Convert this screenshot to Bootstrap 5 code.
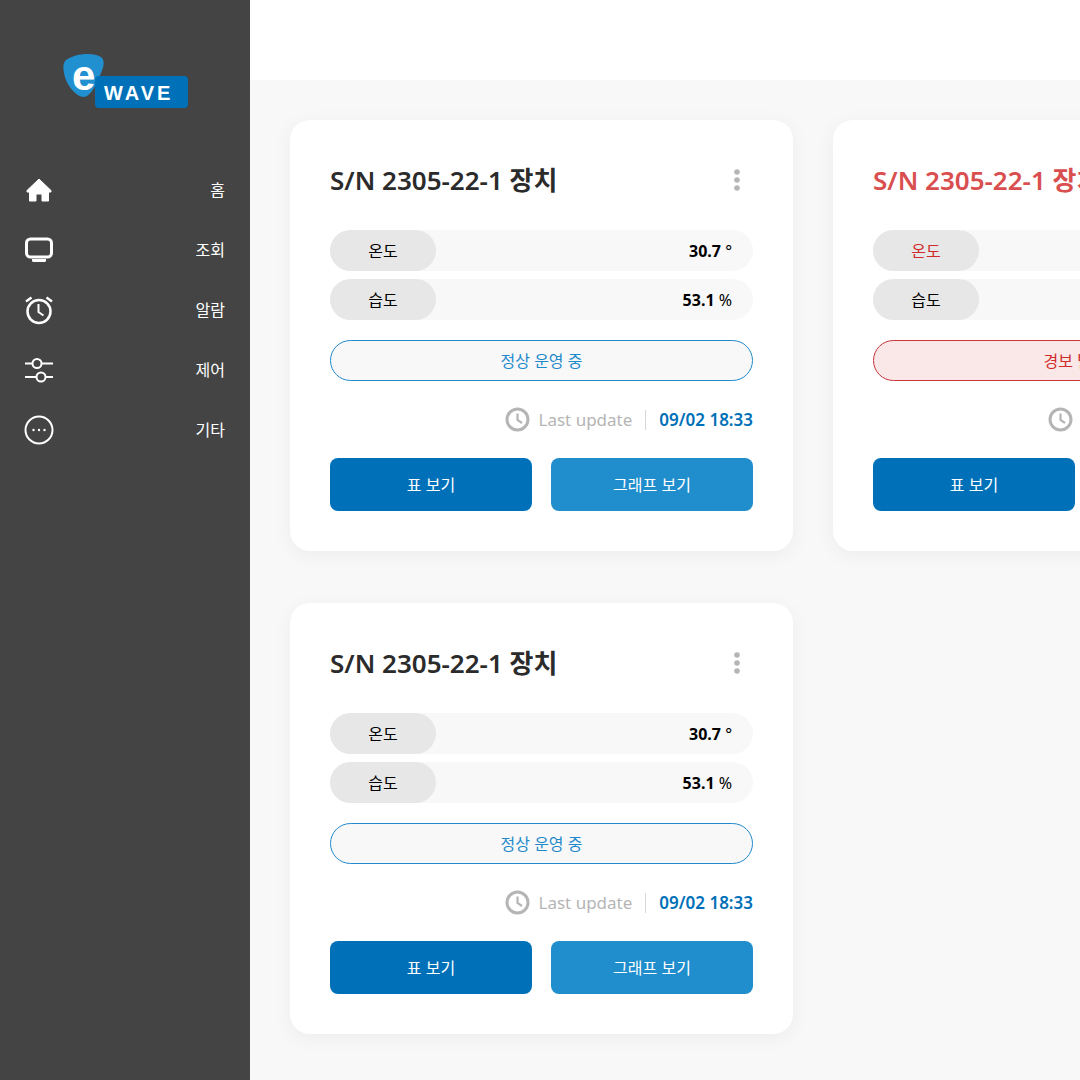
<!DOCTYPE html>
<html lang="ko">
  <head>
    <meta charset="UTF-8" />
    <meta name="viewport" content="width=device-width, initial-scale=1" />
    <title>eWAVE - 장치 목록</title>
    <link href="https://cdn.jsdelivr.net/npm/bootstrap@5.3.0/dist/css/bootstrap.min.css" rel="stylesheet" />
    <style>
      html, body { height: 1080px; overflow: hidden; }
      body {
        background: #f8f8f8;
        font-family: "Noto Sans", "Noto Sans CJK KR", sans-serif;
        color: #000;
      }
      .side-bar { width: 250px; flex: 0 0 250px; height: 1080px; background: #444; }
      .side-logo { height: 160px; padding: 53px 0 0 63px; }
      .side-item { height: 60px; padding: 0 25px 0 24px; color: #fff; font-size: 16px; }
      .side-icon { width: 30px; height: 30px; display: block; }
      .top-strip { height: 80px; background: #fff; }
      .device-grid {
        display: grid;
        grid-template-columns: 503px 503px;
        column-gap: 40px;
        row-gap: 52px;
        padding: 40px;
      }
      .device-card {
        height: 431px;
        padding: 40px;
        background: #fff;
        border-radius: 20px;
        box-shadow: 0 4px 20px rgba(0, 0, 0, 0.05);
      }
      .device-head { height: 40px; margin-bottom: 30px; }
      .device-title { font-size: 26px; font-weight: 600; line-height: 40px; color: #2b2b2b; margin: 0; white-space: nowrap; }
      .is-alarm .device-title { color: #d94f4f; }
      .more-dots { width: 6px; height: 22px; margin-right: 13px; }
      .metric-row { height: 41px; margin-bottom: 8px; background: #f8f8f8; border-radius: 21px; font-size: 16px; padding-right: 21px; }
      .metric-name { width: 106px; height: 41px; background: #e7e7e7; border-radius: 21px; }
      .metric-alert { color: #d02b2b; }
      .metric-val { font-weight: 700; }
      .metric-unit { font-weight: 400; }
      .status-pill { height: 41px; margin-top: 20px; border: 1px solid #1f8acb; border-radius: 21px; background: #f8f8f8; color: #1f8acb; font-size: 16px; }
      .is-alarm .status-pill { border-color: #c8353a; background: #fae7e7; color: #d02b2b; }
      .update-line { height: 77px; font-size: 17px; padding-bottom: 0; white-space: nowrap; }
      .clock-ico { width: 25px; height: 25px; margin-right: 8px; }
      .update-label { color: #b5b5b5; }
      .update-sep { width: 1px; height: 20px; background: #d8d8d8; margin: 0 13px; }
      .update-time { color: #0071b9; font-weight: 600; }
      .btn-row { gap: 19px; }
      .btn-row .btn { flex: 1 1 0; height: 53px; border: 0; border-radius: 8px; color: #fff; font-size: 16px; padding: 0; }
      .btn-table { background: #0071b9; }
      .btn-graph { background: #208dcd; }
    </style>
  </head>
  <body>
    <svg width="0" height="0" class="position-absolute">
      <symbol id="ico-clock" viewBox="0 0 25 25">
        <circle cx="12.5" cy="12.5" r="10.5" fill="none" stroke="#b5b5b5" stroke-width="3" />
        <path d="M12.5 6.5v6.5l4.5 3" fill="none" stroke="#b5b5b5" stroke-width="2.2" />
      </symbol>
      <symbol id="ico-more" viewBox="0 0 6 22">
        <circle cx="3" cy="3" r="2.8" fill="#b5b5b5" />
        <circle cx="3" cy="11" r="2.8" fill="#b5b5b5" />
        <circle cx="3" cy="19" r="2.8" fill="#b5b5b5" />
      </symbol>
    </svg>

    <div class="d-flex">
      <!-- Sidebar -->
      <div class="side-bar">
        <div class="side-logo">
          <svg width="126" height="56" viewBox="0 0 126 56">
            <path d="M3 7C12 0 31 -1 38 4C42 7 41 13 38 20C33 32 28 43 21 44C13 44 3 32 1 20C0 14 0 10 3 7Z" fill="#2190d0" />
            <text x="9" y="37" font-family="Liberation Sans, sans-serif" font-size="42" font-weight="700" fill="#fff">e</text>
            <rect x="32" y="23" width="93" height="32" rx="4" fill="#0071b9" />
            <text x="41" y="47" font-family="Liberation Sans, sans-serif" font-size="20" font-weight="700" letter-spacing="3" fill="#fff">WAVE</text>
          </svg>
        </div>
        <div class="side-item d-flex align-items-center justify-content-between">
          <svg class="side-icon" viewBox="0 0 30 30"><path d="M15 4L27 15.5V17H24.5V26H18V19H12V26H5.5V17H3V15.5Z" fill="#fff" stroke="#fff" stroke-width="1" stroke-linejoin="round" /></svg>
          <span>홈</span>
        </div>
        <div class="side-item d-flex align-items-center justify-content-between">
          <svg class="side-icon" viewBox="0 0 30 30"><rect x="2.500" y="4" width="25" height="18" rx="4" fill="none" stroke="#fff" stroke-width="3" /><path d="M8 24h14v1.500a1.500 1.500 0 0 1-1.500 1.500h-11A1.500 1.500 0 0 1 8 25.500Z" fill="#fff" /></svg>
          <span>조회</span>
        </div>
        <div class="side-item d-flex align-items-center justify-content-between">
          <svg class="side-icon" viewBox="0 0 30 30"><circle cx="15" cy="16.500" r="11.500" fill="none" stroke="#fff" stroke-width="2.500" /><path d="M14.500 9v8l5 3.500" fill="none" stroke="#fff" stroke-width="2" /><path d="M2 6.500L7.500 2.500M28 6.500L22.500 2.500" stroke="#fff" stroke-width="2.500" /></svg>
          <span>알람</span>
        </div>
        <div class="side-item d-flex align-items-center justify-content-between">
          <svg class="side-icon" viewBox="0 0 30 30"><g fill="none" stroke="#fff" stroke-width="2"><path d="M1 8.500H8M18 8.500H29" /><circle cx="13" cy="8.500" r="4.500" /><path d="M1 22H12M22 22H29" /><circle cx="17" cy="22" r="4.500" /></g></svg>
          <span>제어</span>
        </div>
        <div class="side-item d-flex align-items-center justify-content-between">
          <svg class="side-icon" viewBox="0 0 30 30"><circle cx="15" cy="15" r="13.500" fill="none" stroke="#fff" stroke-width="2" /><circle cx="9.500" cy="15" r="1.200" fill="#fff" /><circle cx="15" cy="15" r="1.200" fill="#fff" /><circle cx="20.500" cy="15" r="1.200" fill="#fff" /></svg>
          <span>기타</span>
        </div>
      </div>

      <!-- Main -->
      <div class="flex-grow-1">
        <div class="top-strip"></div>
        <div class="device-grid">

          <div class="device-card">
            <div class="device-head d-flex align-items-center justify-content-between">
              <h2 class="device-title">S/N 2305-22-1 장치</h2>
              <svg class="more-dots"><use href="#ico-more" /></svg>
            </div>
            <div class="metric-row d-flex align-items-center justify-content-between">
              <div class="metric-name d-flex align-items-center justify-content-center">온도</div>
              <div><span class="metric-val">30.7</span> <span class="metric-unit">°</span></div>
            </div>
            <div class="metric-row d-flex align-items-center justify-content-between">
              <div class="metric-name d-flex align-items-center justify-content-center">습도</div>
              <div><span class="metric-val">53.1</span> <span class="metric-unit">%</span></div>
            </div>
            <div class="status-pill d-flex align-items-center justify-content-center">정상 운영 중</div>
            <div class="update-line d-flex align-items-center justify-content-end">
              <svg class="clock-ico"><use href="#ico-clock" /></svg>
              <span class="update-label">Last update</span>
              <span class="update-sep"></span>
              <span class="update-time">09/02 18:33</span>
            </div>
            <div class="btn-row d-flex">
              <button class="btn btn-table">표 보기</button>
              <button class="btn btn-graph">그래프 보기</button>
            </div>
          </div>

          <div class="device-card is-alarm">
            <div class="device-head d-flex align-items-center justify-content-between">
              <h2 class="device-title">S/N 2305-22-1 장치</h2>
              <svg class="more-dots"><use href="#ico-more" /></svg>
            </div>
            <div class="metric-row d-flex align-items-center justify-content-between">
              <div class="metric-name metric-alert d-flex align-items-center justify-content-center">온도</div>
              <div><span class="metric-val">30.7</span> <span class="metric-unit">°</span></div>
            </div>
            <div class="metric-row d-flex align-items-center justify-content-between">
              <div class="metric-name d-flex align-items-center justify-content-center">습도</div>
              <div><span class="metric-val">53.1</span> <span class="metric-unit">%</span></div>
            </div>
            <div class="status-pill d-flex align-items-center justify-content-center">경보 발생 중</div>
            <div class="update-line d-flex align-items-center justify-content-end">
              <svg class="clock-ico"><use href="#ico-clock" /></svg>
              <span class="update-label">Last update</span>
              <span class="update-sep"></span>
              <span class="update-time">09/02 18:33</span>
            </div>
            <div class="btn-row d-flex">
              <button class="btn btn-table">표 보기</button>
              <button class="btn btn-graph">그래프 보기</button>
            </div>
          </div>

          <div class="device-card">
            <div class="device-head d-flex align-items-center justify-content-between">
              <h2 class="device-title">S/N 2305-22-1 장치</h2>
              <svg class="more-dots"><use href="#ico-more" /></svg>
            </div>
            <div class="metric-row d-flex align-items-center justify-content-between">
              <div class="metric-name d-flex align-items-center justify-content-center">온도</div>
              <div><span class="metric-val">30.7</span> <span class="metric-unit">°</span></div>
            </div>
            <div class="metric-row d-flex align-items-center justify-content-between">
              <div class="metric-name d-flex align-items-center justify-content-center">습도</div>
              <div><span class="metric-val">53.1</span> <span class="metric-unit">%</span></div>
            </div>
            <div class="status-pill d-flex align-items-center justify-content-center">정상 운영 중</div>
            <div class="update-line d-flex align-items-center justify-content-end">
              <svg class="clock-ico"><use href="#ico-clock" /></svg>
              <span class="update-label">Last update</span>
              <span class="update-sep"></span>
              <span class="update-time">09/02 18:33</span>
            </div>
            <div class="btn-row d-flex">
              <button class="btn btn-table">표 보기</button>
              <button class="btn btn-graph">그래프 보기</button>
            </div>
          </div>

        </div>
      </div>
    </div>
    <script src="https://cdn.jsdelivr.net/npm/bootstrap@5.3.0/dist/js/bootstrap.bundle.min.js"></script>
  </body>
</html>
